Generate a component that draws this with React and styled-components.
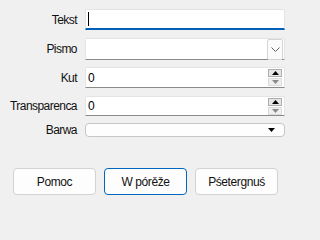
import React from "react";
import styled, { createGlobalStyle } from "styled-components";

const GlobalStyle = createGlobalStyle`
  html, body {
    margin: 0;
    padding: 0;
    background: #f0f0f0;
  }
  body {
    font-family: "Liberation Sans", Arial, sans-serif;
    font-size: 12px;
    color: #000;
  }
`;

const Dialog = styled.div`
  width: 293px;
  height: 210px;
  box-sizing: border-box;
  padding: 9px 8px 0 7px;
  background: #f0f0f0;
`;

const Form = styled.div`
  display: grid;
  grid-template-columns: 70px 200px;
  grid-template-rows: 21px 22px 21px 20px 14px;
  column-gap: 8px;
  row-gap: 7.5px;
`;

const Label = styled.div`
  display: flex;
  align-items: center;
  justify-content: flex-end;
  white-space: nowrap;
  letter-spacing: -0.55px;
  color: #111;
`;

const Field = styled.div`
  position: relative;
  display: flex;
  align-items: center;
  box-sizing: border-box;
  padding-left: 2px;
  background: #fff;
  border: 1px solid #e4e4e4;
  border-bottom: ${(p) => (p.focused ? "2px solid #005fb8" : "1px solid #8a8a8a")};
  border-radius: 2px 2px 0 0;
`;

const Caret = styled.span`
  width: 1px;
  height: 14px;
  background: #000;
`;

const DropButton = styled.div`
  position: absolute;
  right: 1px;
  top: 0;
  width: 16px;
  height: 21px;
  box-sizing: border-box;
  border: 1px solid #d4d4d4;
  border-radius: 2px;
  background: #fbfbfb;
  display: flex;
  align-items: center;
  justify-content: center;
`;

const Spin = styled.div`
  position: absolute;
  right: 2px;
  top: 1px;
  display: flex;
  flex-direction: column;
  gap: 1px;
`;

const SpinButton = styled.div`
  width: 14px;
  height: 8px;
  box-sizing: border-box;
  border: 1px solid ${(p) => (p.active ? "#adadad" : "#dcdcdc")};
  background: ${(p) => (p.active ? "#e6e6e6" : "#efefef")};
  display: flex;
  align-items: center;
  justify-content: center;
`;

const Combo = styled.div`
  display: flex;
  align-items: center;
  justify-content: flex-end;
  box-sizing: border-box;
  padding-right: 9px;
  background: #fdfdfd;
  border: 1px solid #c6c6c6;
  border-radius: 4px;
`;

const Buttons = styled.div`
  display: flex;
  justify-content: center;
  gap: 8px;
  margin-top: 31px;
  padding-right: 1px;
`;

const Button = styled.button`
  width: 83px;
  height: 27px;
  box-sizing: border-box;
  font-family: "Liberation Sans", Arial, sans-serif;
  font-size: 12px;
  letter-spacing: -0.4px;
  color: #111;
  background: #fdfdfd;
  border: 1px solid ${(p) => (p.primary ? "#0067c0" : "#d2d2d2")};
  border-radius: 4px;
  padding: 0;
`;

const Tri = ({ up, color }) => (
  <svg width="7" height="4" viewBox="0 0 7 4">
    <polygon points={up ? "0,4 7,4 3.5,0" : "0,0 7,0 3.5,4"} fill={color} />
  </svg>
);

const Spinner = () => (
  <Spin>
    <SpinButton active>
      <Tri up color="#000" />
    </SpinButton>
    <SpinButton>
      <Tri color="#8a8a8a" />
    </SpinButton>
  </Spin>
);

export default function App() {
  return (
    <Dialog>
      <GlobalStyle />
      <Form>
        <Label>Tekst</Label>
        <Field focused>
          <Caret />
        </Field>

        <Label>Pismo</Label>
        <Field>
          <DropButton>
            <svg width="9" height="5" viewBox="0 0 9 5">
              <polyline points="0.5,0.5 4.5,4.5 8.5,0.5" fill="none" stroke="#606060" strokeWidth="1" />
            </svg>
          </DropButton>
        </Field>

        <Label>Kut</Label>
        <Field>
          0
          <Spinner />
        </Field>

        <Label>Transparenca</Label>
        <Field>
          0
          <Spinner />
        </Field>

        <Label>Barwa</Label>
        <Combo>
          <Tri color="#000" />
        </Combo>
      </Form>
      <Buttons>
        <Button>Pomoc</Button>
        <Button primary>W pórěže</Button>
        <Button>Pśetergnuś</Button>
      </Buttons>
    </Dialog>
  );
}
